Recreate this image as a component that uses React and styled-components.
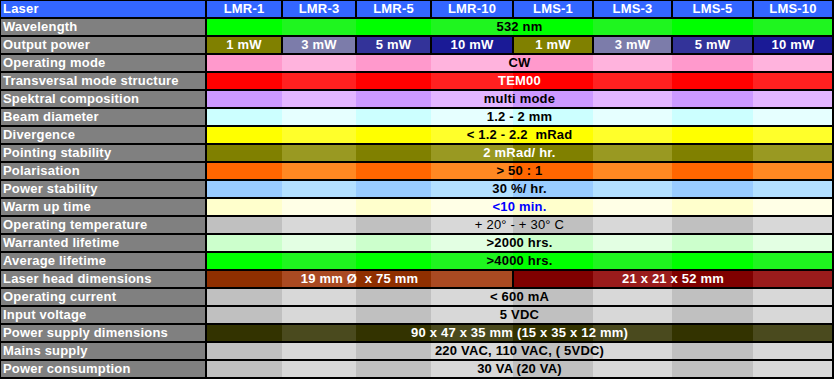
import React from "react";
import styled, {createGlobalStyle} from "styled-components";

const COLS = [74, 72, 73, 80, 78, 77, 79, 78];
const MODELS = ['LMR-1', 'LMR-3', 'LMR-5', 'LMR-10', 'LMS-1', 'LMS-3', 'LMS-5', 'LMS-10'];

const GRAY = ['#c0c0c0', '#d8d8d8'];

// each row: label, base/light colour, text colour, cells [{text, span}]
const rows = [
    {label: 'Wavelength', bg: ['#00ff00', '#1ff51f'], fg: '#000', cells: [{text: '532 nm', span: 8}]},
    {label: 'Output power', power: true},
    {label: 'Operating mode', bg: ['#ff99cc', '#ffb3dd'], fg: '#000', cells: [{text: 'CW', span: 8}]},
    {label: 'Transversal mode structure', bg: ['#ff0000', '#ff2020'], fg: '#fff', cells: [{text: 'TEM00', span: 8}]},
    {label: 'Spektral composition', bg: ['#cc99ff', '#e3b5ff'], fg: '#000', cells: [{text: 'multi mode', span: 8}]},
    {label: 'Beam diameter', bg: ['#ccffff', '#e6ffff'], fg: '#000', cells: [{text: '1.2 - 2 mm', span: 8}]},
    {label: 'Divergence', bg: ['#ffff00', '#ffff2a'], fg: '#000', cells: [{text: '< 1.2 - 2.2  mRad', span: 8}]},
    {label: 'Pointing stability', bg: ['#808000', '#999922'], fg: '#fff', cells: [{text: '2 mRad/ hr.', span: 8}]},
    {label: 'Polarisation', bg: ['#ff6600', '#ff8822'], fg: '#000', cells: [{text: '> 50 : 1', span: 8}]},
    {label: 'Power stability', bg: ['#99ccff', '#b3e0ff'], fg: '#000', cells: [{text: '30 %/ hr.', span: 8}]},
    {label: 'Warm up time', bg: ['#ffffcc', '#ffffe6'], fg: '#0000ff', cells: [{text: '<10 min.', span: 8}]},
    {label: 'Operating temperature', bg: GRAY, fg: '#000', thin: true, cells: [{text: '+ 20° - + 30° C', span: 8}]},
    {label: 'Warranted lifetime', bg: ['#ccffcc', '#e3ffe3'], fg: '#000', cells: [{text: '>2000 hrs.', span: 8}]},
    {label: 'Average lifetime', bg: ['#00ff00', '#1ff51f'], fg: '#000', cells: [{text: '>4000 hrs.', span: 8}]},
    {label: 'Laser head dimensions', fg: '#fff', cells: [
        {text: '19 mm Ø  x 75 mm', span: 4, bg: ['#8f2f00', '#aa4a22']},
        {text: '21 x 21 x 52 mm', span: 4, bg: ['#800000', '#9a1c1c']},
    ]},
    {label: 'Operating current', bg: GRAY, fg: '#000', cells: [{text: '< 600 mA', span: 8}]},
    {label: 'Input voltage', bg: GRAY, fg: '#000', cells: [{text: '5 VDC', span: 8}]},
    {label: 'Power supply dimensions', bg: ['#333300', '#4a4a1e'], fg: '#fff', cells: [{text: '90 x 47 x 35 mm (15 x 35 x 12 mm)', span: 8}]},
    {label: 'Mains supply', bg: GRAY, fg: '#000', cells: [{text: '220 VAC, 110 VAC, ( 5VDC)', span: 8}]},
    {label: 'Power consumption', bg: GRAY, fg: '#000', cells: [{text: '30 VA (20 VA)', span: 8}]},
];

const POWER = [
    {text: '1 mW', bg: ['#808000', '#808000']},
    {text: '3 mW', bg: ['#666699', '#7c7caa']},
    {text: '5 mW', bg: ['#333399', '#333399']},
    {text: '10 mW', bg: ['#000080', '#1a1a96']},
];

// stripe every second model column a little lighter, bands meet in the middle of the gaps
function bands(from, span, [base, light]) {
    const stops = [];
    let x = 0;
    for (let i = from; i < from + span; i++) {
        const w = COLS[i];
        const left = i === from ? 0 : x - 1;
        const right = i === from + span - 1 ? x + w : x + w + 1;
        const c = i % 2 ? light : base;
        stops.push(`${c} ${left}px ${right}px`);
        x += w + 2;
    }
    return `linear-gradient(to right, ${stops.join(', ')})`;
}

function App() {
    return (
        <>
            <GlobalStyle/>
            <Table>
                <HeadLabel>Laser</HeadLabel>
                {MODELS.map(m => <HeadCell key={m}>{m}</HeadCell>)}
                {rows.map(row => {
                    let col = 0;
                    let cells;
                    if (row.power) {
                        cells = COLS.map((w, i) => {
                            const p = POWER[i % 4];
                            return <Cell key={i} $span={1} $fg="#fff" style={{background: bands(i, 1, p.bg)}}>{p.text}</Cell>;
                        });
                    } else {
                        cells = row.cells.map((c, i) => {
                            const bg = bands(col, c.span, c.bg || row.bg);
                            col += c.span;
                            return <Cell key={i} $span={c.span} $fg={row.fg} $thin={row.thin} style={{background: bg}}>{c.text}</Cell>;
                        });
                    }
                    return (
                        <React.Fragment key={row.label}>
                            <Label>{row.label}</Label>
                            {cells}
                        </React.Fragment>
                    );
                })}
            </Table>
        </>
    );
}

export default App;

const GlobalStyle = createGlobalStyle`
html, body {margin: 0; padding: 0; background: #000;}
body {font-family: "Liberation Sans", Arial, sans-serif;}
`
const Table = styled.div`
display: grid;
grid-template-columns: 204px ${COLS.map(w => w + 'px').join(' ')};
grid-auto-rows: 16px;
gap: 2px;
padding: 1px 2px 0 1px;
width: 834px;
box-sizing: border-box;
background: #000;
font-size: 13px;
font-weight: bold;
letter-spacing: 0.2px;
`
const HeadLabel = styled.div`
background: #3366ff;
color: #fff;
padding-left: 2px;
line-height: 16px;
white-space: nowrap;
`
const HeadCell = styled.div`
background: #3366ff;
color: #fff;
text-align: center;
line-height: 16px;
white-space: nowrap;
`
const Label = styled.div`
background: #808080;
color: #fff;
padding-left: 2px;
line-height: 16px;
white-space: nowrap;
`
const Cell = styled.div`
grid-column: span ${p => p.$span};
color: ${p => p.$fg};
font-weight: ${p => p.$thin ? 'normal' : 'bold'};
font-size: 13px;
text-align: center;
line-height: 16px;
white-space: pre;
`
